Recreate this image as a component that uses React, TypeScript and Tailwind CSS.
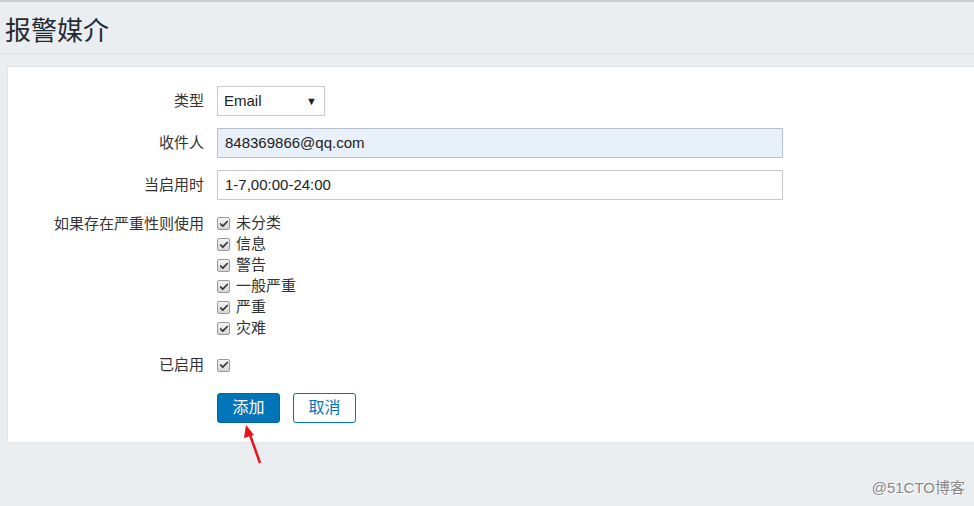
import { Check } from "lucide-react";

const font = { fontFamily: '"Liberation Sans", Arial, "Noto Sans CJK SC", sans-serif' };

const severities = ["未分类", "信息", "警告", "一般严重", "严重", "灾难"];

function Box() {
  return (
    <span className="w-[13px] h-[13px] rounded-[2px] border border-[#9a9a9a] bg-gradient-to-b from-[#f4f4f4] to-[#d6d6d6] flex items-center justify-center">
      <Check className="w-[10px] h-[10px] text-[#333]" strokeWidth={4} />
    </span>
  );
}

function Row({ label, children, className = "" }: { label: string; children: React.ReactNode; className?: string }) {
  return (
    <div className={"flex " + className}>
      <div className="w-[196px] shrink-0 text-right text-[15px] text-[#333]">{label}</div>
      <div className="ml-[13px] flex-1">{children}</div>
    </div>
  );
}

export default function App() {
  return (
    <div className="relative w-[974px] h-[506px] bg-[#ebeef0] overflow-hidden" style={font}>
      <div className="h-[2px] bg-[#c8cdd0]" />
      <header className="h-[52px] border-b border-[#dde1e3] flex items-center px-[5px]">
        <h1 className="text-[26px] text-[#1f2c33] leading-none mt-[7px]">报警媒介</h1>
      </header>
      <div className="mt-[12px] ml-[7px] -mr-[4px] h-[377px] bg-white border border-[#dfe4e7] pt-[19px]">
        <Row label="类型" className="items-center h-[30px]">
          <div className="w-[108px] h-[30px] border border-[#c8c8c8] flex items-center justify-between px-[6px] text-[15px] text-[#222]">
            <span>Email</span>
            <span className="text-[11px] mr-[1px]">▼</span>
          </div>
        </Row>
        <Row label="收件人" className="items-center h-[30px] mt-[12px]">
          <div className="w-[566px] h-[30px] border border-[#b8c2cc] bg-[#e8f0fa] flex items-center px-[7px] text-[15px] text-[#222]">
            848369866@qq.com
          </div>
        </Row>
        <Row label="当启用时" className="items-center h-[30px] mt-[12px]">
          <div className="w-[566px] h-[30px] border border-[#c8c8c8] bg-white flex items-center px-[7px] text-[15px] text-[#222]">
            1-7,00:00-24:00
          </div>
        </Row>
        <Row label="如果存在严重性则使用" className="mt-[13px]">
          <div className="flex flex-col">
            {severities.map((s) => (
              <div key={s} className="h-[21px] flex items-center gap-[6px] text-[15px] text-[#333]">
                <Box />
                <span>{s}</span>
              </div>
            ))}
          </div>
        </Row>
        <Row label="已启用" className="items-center h-[20px] mt-[16px]">
          <Box />
        </Row>
        <div className="flex gap-[13px] ml-[209px] mt-[18px]">
          <button className="w-[63px] h-[30px] rounded-[3px] bg-[#0275b8] border border-[#0366a0] text-white text-[16px]">添加</button>
          <button className="w-[63px] h-[30px] rounded-[3px] bg-white border border-[#0275b8] text-[#0275b8] text-[16px]">取消</button>
        </div>
      </div>
      <svg className="absolute left-[240px] top-[420px]" width="30" height="50" viewBox="0 0 30 50">
        <line x1="20" y1="43" x2="9" y2="12" stroke="#e8141b" strokeWidth="2.5" />
        <polygon points="6,5 4,18 14,15" fill="#e8141b" />
      </svg>
      <div className="absolute right-[9px] bottom-[7px] text-[15px] text-[#888]" style={{ textShadow: "1px 1px 0 #fff" }}>
        @51CTO博客
      </div>
    </div>
  );
}
